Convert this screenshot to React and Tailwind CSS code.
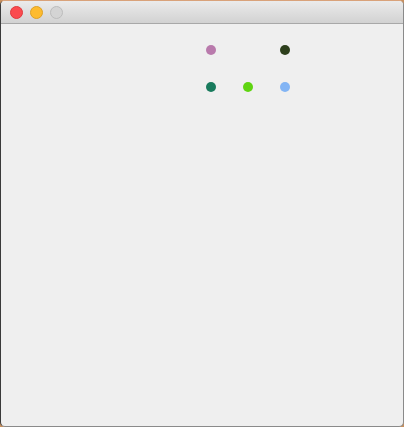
import React from "react";

const dots = [
  "#b97aac", null, "#2d3f1c",
  "#197b5d", "#5fd411", "#82b4f4",
];

const Light = ({ color, border }) => (
  <span className={`block w-[13px] h-[13px] rounded-full border ${color} ${border}`} />
);

export default function App() {
  return (
    <div className="w-[404px] h-[427px] bg-[#c9905e] font-['Liberation_Sans',sans-serif]">
      <div className="w-full h-full flex flex-col rounded-[5px] overflow-hidden border border-[#3a3a3a] border-t-[#d9a27a] border-r-[#8a8a8a] border-b-[#8a8a8a] bg-[#efefef]">
        {/* title bar */}
        <div className="h-[23px] shrink-0 flex items-center gap-[7px] pl-[9px] pt-[1px] bg-gradient-to-b from-[#ebebeb] to-[#d2d2d2] border-b border-[#a8a8a8]">
          <Light color="bg-[#fb4b4f]" border="border-[#e0393d]" />
          <Light color="bg-[#fdbb2e]" border="border-[#dea124]" />
          <Light color="bg-[#d4d4d4]" border="border-[#bcbcbc]" />
        </div>
        {/* content */}
        <div className="flex-1 pt-[7px] pl-[191px]">
          <div className="grid grid-cols-[37px_37px_37px]">
            {dots.map((c, i) => (
              <div key={i} className="h-[37px] flex items-center justify-center">
                {c && <span className="block w-[10px] h-[10px] rounded-full" style={{ backgroundColor: c }} />}
              </div>
            ))}
          </div>
        </div>
      </div>
    </div>
  );
}
